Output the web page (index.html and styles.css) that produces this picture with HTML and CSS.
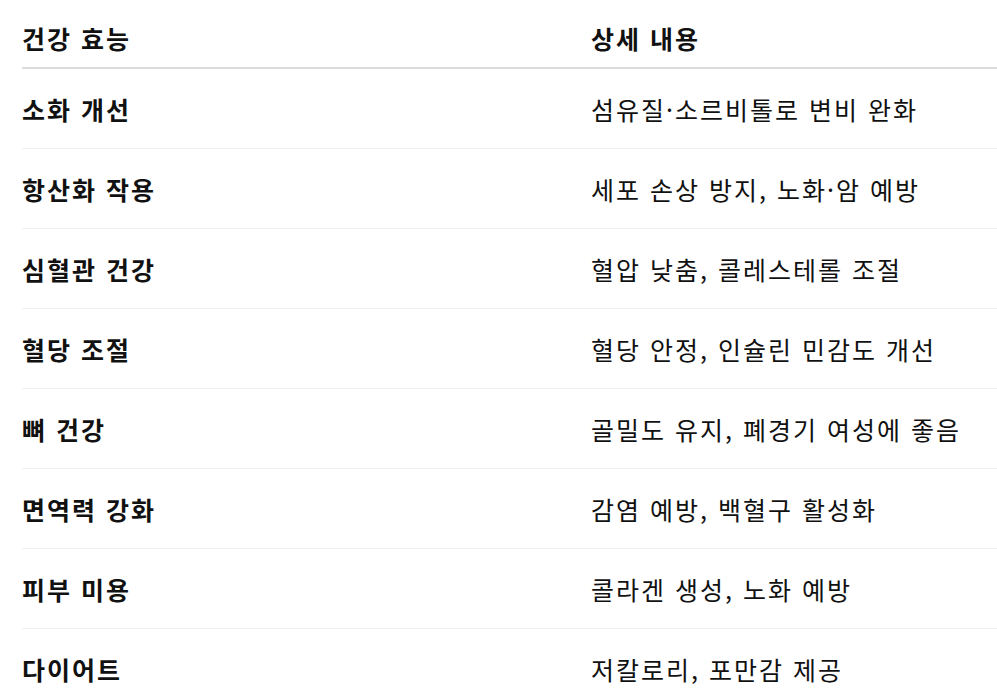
FILE: index.html
```html
<!DOCTYPE html>
<html lang="ko">
<head>
<meta charset="utf-8">
<link rel="stylesheet" href="styles.css">
</head>
<body>
<table class="benefits">
  <thead>
    <tr><th>건강 효능</th><th>상세 내용</th></tr>
  </thead>
  <tbody>
    <tr><td class="name">소화 개선</td><td>섬유질·소르비톨로 변비 완화</td></tr>
    <tr><td class="name">항산화 작용</td><td>세포 손상 방지, 노화·암 예방</td></tr>
    <tr><td class="name">심혈관 건강</td><td>혈압 낮춤, 콜레스테롤 조절</td></tr>
    <tr><td class="name">혈당 조절</td><td>혈당 안정, 인슐린 민감도 개선</td></tr>
    <tr><td class="name">뼈 건강</td><td>골밀도 유지, 폐경기 여성에 좋음</td></tr>
    <tr><td class="name">면역력 강화</td><td>감염 예방, 백혈구 활성화</td></tr>
    <tr><td class="name">피부 미용</td><td>콜라겐 생성, 노화 예방</td></tr>
    <tr><td class="name">다이어트</td><td>저칼로리, 포만감 제공</td></tr>
  </tbody>
</table>
</body>
</html>
```
FILE: styles.css
```css
html, body {
  margin: 0;
  padding: 0;
  background: #fff;
}
body {
  padding-left: 22px;
  font-family: "Noto Sans CJK KR", "Noto Sans", sans-serif;
  color: #111;
  font-size: 25px;
  letter-spacing: 2px;
  word-spacing: 0;
}
.benefits {
  border-collapse: collapse;
  width: 975px;
  table-layout: fixed;
}
.benefits th, .benefits td {
  text-align: left;
  padding: 0;
  line-height: 32px;
}
.benefits th:first-child, .benefits td:first-child {
  width: 569px;
}
.benefits th {
  font-weight: 700;
  height: 68px;
  padding-top: 8px;
  box-sizing: border-box;
  border-bottom: 2px solid #ddd;
}
.benefits td {
  height: 79px;
  font-weight: 400;
  border-bottom: 1px solid #f0f0f0;
}
.benefits td.name {
  font-weight: 700;
}
```
